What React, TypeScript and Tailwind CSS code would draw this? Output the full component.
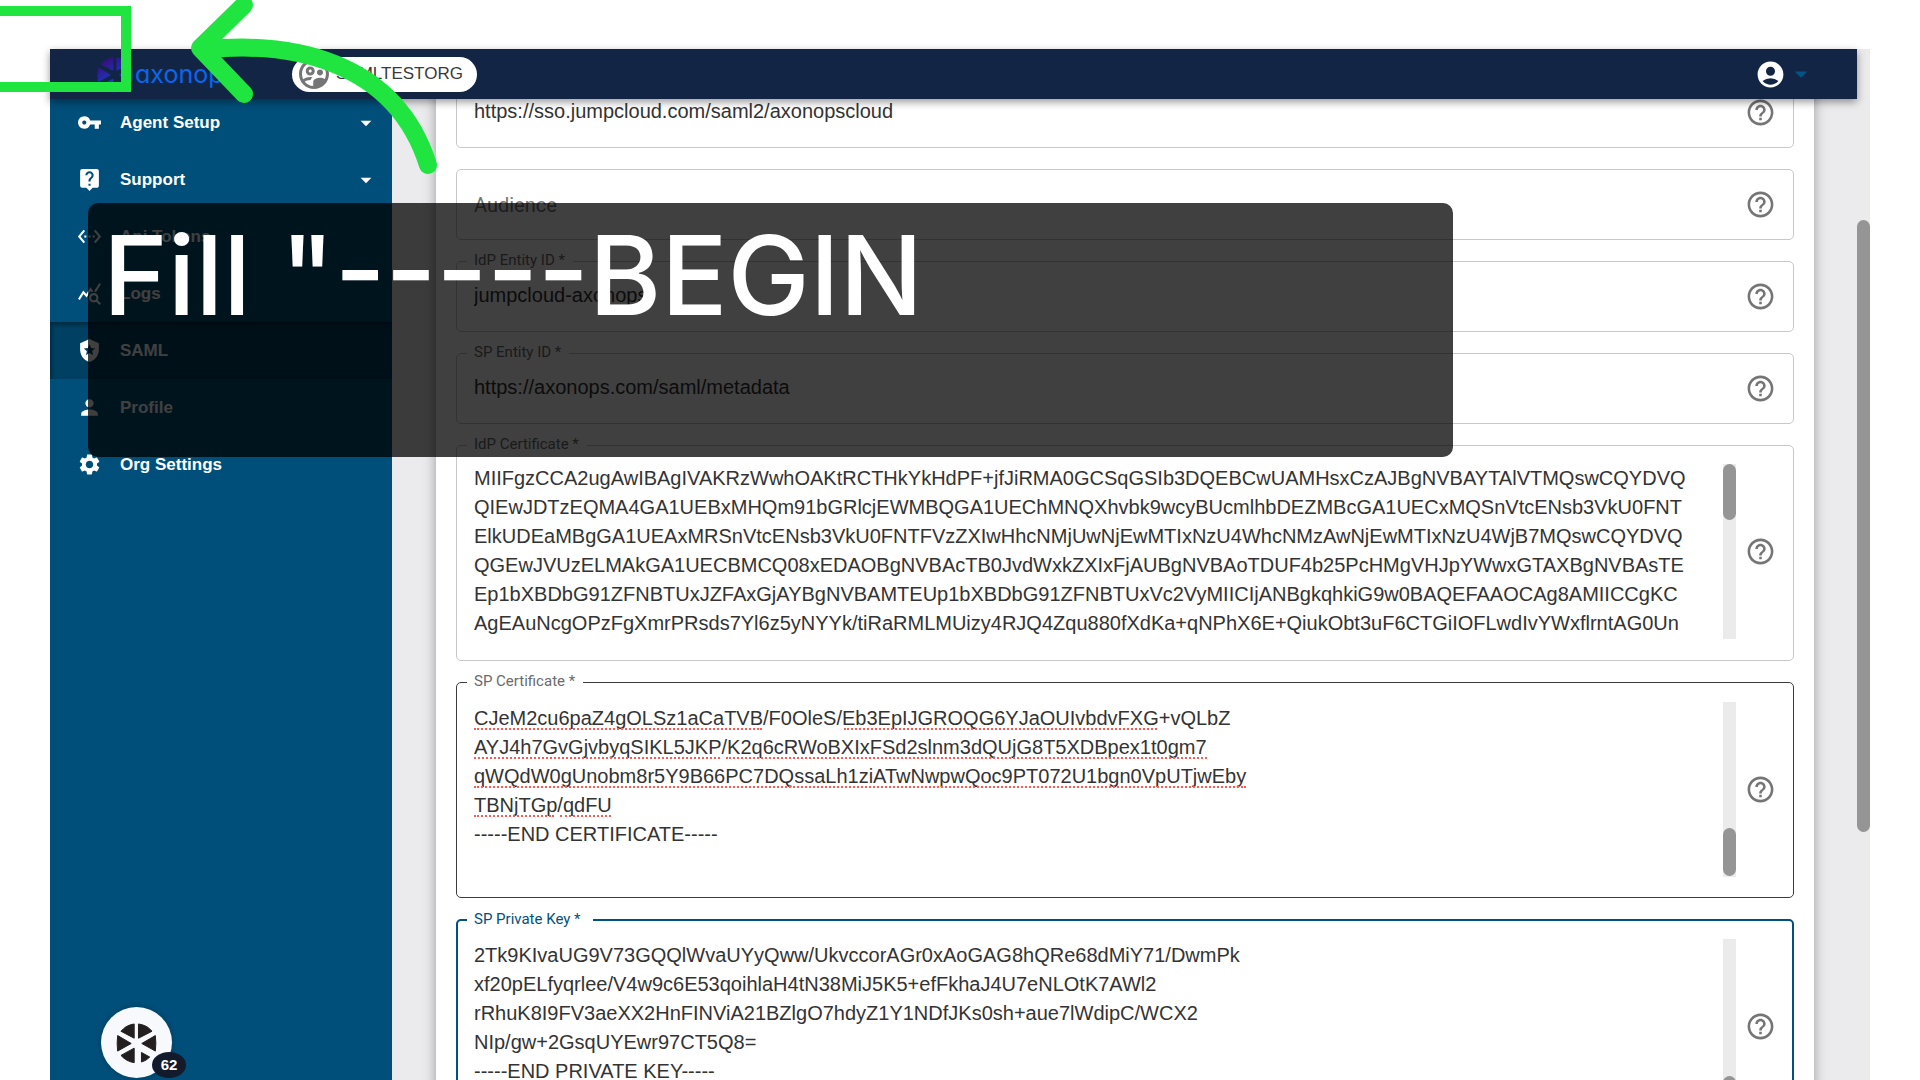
import type { ReactNode } from "react";
import {
  MdAccountCircle,
  MdArrowDropDown,
  MdHelpOutline,
  MdLiveHelp,
  MdLocalPolice,
  MdOutlineSupervisedUserCircle,
  MdPerson,
  MdQueryStats,
  MdSettings,
  MdSettingsEthernet,
  MdVpnKey,
} from "react-icons/md";

const IDP_CERT = [
  "MIIFgzCCA2ugAwIBAgIVAKRzWwhOAKtRCTHkYkHdPF+jfJiRMA0GCSqGSIb3DQEBCwUAMHsxCzAJBgNVBAYTAlVTMQswCQYDVQ",
  "QIEwJDTzEQMA4GA1UEBxMHQm91bGRlcjEWMBQGA1UEChMNQXhvbk9wcyBUcmlhbDEZMBcGA1UECxMQSnVtcENsb3VkU0FNT",
  "ElkUDEaMBgGA1UEAxMRSnVtcENsb3VkU0FNTFVzZXIwHhcNMjUwNjEwMTIxNzU4WhcNMzAwNjEwMTIxNzU4WjB7MQswCQYDVQ",
  "QGEwJVUzELMAkGA1UECBMCQ08xEDAOBgNVBAcTB0JvdWxkZXIxFjAUBgNVBAoTDUF4b25PcHMgVHJpYWwxGTAXBgNVBAsTE",
  "Ep1bXBDbG91ZFNBTUxJZFAxGjAYBgNVBAMTEUp1bXBDbG91ZFNBTUxVc2VyMIICIjANBgkqhkiG9w0BAQEFAAOCAg8AMIICCgKC",
  "AgEAuNcgOPzFgXmrPRsds7Yl6z5yNYYk/tiRaRMLMUizy4RJQ4Zqu880fXdKa+qNPhX6E+QiukObt3uF6CTGiIOFLwdIvYWxflrntAG0Un",
].join("\n");

const SP_CERT = [
  "CJeM2cu6paZ4gOLSz1aCaTVB/F0OleS/Eb3EpIJGROQG6YJaOUIvbdvFXG+vQLbZ",
  "AYJ4h7GvGjvbyqSIKL5JKP/K2q6cRWoBXIxFSd2slnm3dQUjG8T5XDBpex1t0gm7",
  "qWQdW0gUnobm8r5Y9B66PC7DQssaLh1ziATwNwpwQoc9PT072U1bgn0VpUTjwEby",
  "TBNjTGp/qdFU",
  "-----END CERTIFICATE-----",
].join("\n");

const SP_KEY = [
  "2Tk9KIvaUG9V73GQQlWvaUYyQww/UkvccorAGr0xAoGAG8hQRe68dMiY71/DwmPk",
  "xf20pELfyqrlee/V4w9c6E53qoihlaH4tN38MiJ5K5+efFkhaJ4U7eNLOtK7AWl2",
  "rRhuK8I9FV3aeXX2HnFINViA21BZlgO7hdyZ1Y1NDfJKs0sh+aue7lWdipC/WCX2",
  "NIp/gw+2GsqUYEwr97CT5Q8=",
  "-----END PRIVATE KEY-----",
].join("\n");

// Spell-check marks per line: [gap before, length].
const SPELLING: [number, number][][] = [
  [[0, 288], [82, 313]],
  [[0, 246], [6, 481]],
  [[0, 772]],
  [[0, 80], [6, 51]],
];

function Aperture({ className, fill }: { className: string; fill: string }) {
  return (
    <svg viewBox="108 122 122 127" className={className} aria-hidden="true">
      <defs>
        <linearGradient id="brand" x1="125" y1="130" x2="185" y2="240" gradientUnits="userSpaceOnUse">
          <stop offset="0" stopColor="#3a0a78" />
          <stop offset="1" stopColor="#0a4fe0" />
        </linearGradient>
      </defs>
      <g fill={fill} stroke={fill} strokeWidth="3" strokeLinejoin="round">
        <path d="M112 163 L153 187 L112 210 Q109 187 112 163Z" />
        <path d="M122 150 Q138 131 162 128 L162 171Z" />
        <path d="M175 128 Q200 131 216 150 L175 171Z" />
        <path d="M226 163 L185 187 L226 210 Q229 187 226 163Z" />
        <path d="M122 223 L162 201 L162 245 Q138 241 122 223Z" />
        <path d="M184 214 L209 228 Q198 240 184 243Z" />
      </g>
    </svg>
  );
}

function NavItem({ icon, label, caret, active }: { icon: ReactNode; label: string; caret?: boolean; active?: boolean }) {
  return (
    <a
      href="#"
      className={
        active
          ? "flex h-[57px] items-center bg-[#004163] pl-[27px] pr-[13px] text-[25px] shadow-[inset_2px_3px_4px_rgba(0,0,0,0.35)]"
          : "flex h-[57px] items-center pl-[27px] pr-[13px] text-[25px]"
      }
    >
      {icon}
      <span className="ml-[18px] flex-1 text-[17px] font-bold">{label}</span>
      {caret && <MdArrowDropDown className="text-[26px]" />}
    </a>
  );
}

function HelpButton({ label }: { label: string }) {
  return (
    <button type="button" aria-label={`Help for ${label}`} className="shrink-0 text-[31px] text-[#757575]">
      <MdHelpOutline />
    </button>
  );
}

function FieldLabel({ id, text, focused }: { id: string; text: string; focused?: boolean }) {
  return (
    <label
      htmlFor={id}
      className={
        focused
          ? "absolute -top-[11px] left-[9px] bg-white pl-[7px] pr-[12px] font-[Roboto,sans-serif] text-[15px] leading-[18px] text-[#00517d]"
          : "absolute -top-[11px] left-[10px] bg-white pl-[7px] pr-[8px] font-[Roboto,sans-serif] text-[15px] leading-[18px] text-[#6b6b6b]"
      }
    >
      {text} *
    </label>
  );
}

function TextField({ id, name, value, floating }: { id: string; name: string; value?: string; floating?: boolean }) {
  return (
    <div className="relative flex h-[71px] shrink-0 items-center rounded-[5px] border border-[#c8c8c8] pl-[17px] pr-[17px]">
      {floating && <FieldLabel id={id} text={name} />}
      <input
        id={id}
        type="text"
        aria-label={floating ? undefined : name}
        defaultValue={value}
        placeholder={value ? undefined : name}
        className="min-w-0 flex-1 bg-transparent pb-1 text-[20px] text-[#333333] outline-none placeholder:font-[Roboto,sans-serif] placeholder:text-[#757575] placeholder-shown:pb-0"
      />
      <HelpButton label={name} />
    </div>
  );
}

function AreaField({
  id,
  name,
  value,
  frame,
  inset,
  thumb,
  marks,
  focused,
}: {
  id: string;
  name: string;
  value: string;
  frame: string;
  inset: string;
  thumb: string;
  marks?: [number, number][][];
  focused?: boolean;
}) {
  return (
    <div className={`relative flex h-[216px] shrink-0 items-center rounded-[5px] ${frame}`}>
      <FieldLabel id={id} text={name} focused={focused} />
      <div className="relative flex h-[175px] min-w-0 flex-1">
        <textarea
          id={id}
          defaultValue={value}
          spellCheck={false}
          wrap="off"
          className={`h-full min-w-0 flex-1 resize-none overflow-hidden bg-transparent text-[20px] leading-[29px] text-[#333333] outline-none ${inset}`}
        />
        {marks && (
          <div aria-hidden="true" className="pointer-events-none absolute -top-[1px] left-0">
            {marks.map((row, i) => (
              <div key={i} className="flex h-[29px]">
                {row.map(([gap, length], j) => (
                  <span
                    key={j}
                    className="border-b-2 border-dotted border-[#ff5a52]"
                    style={{ marginLeft: gap, width: length }}
                  />
                ))}
              </div>
            ))}
          </div>
        )}
        <div className={`flex w-[13px] flex-col bg-[#ebebeb] ${thumb}`}>
          <div className="w-full rounded-full bg-[#959595] [flex-basis:var(--thumb)]" />
        </div>
      </div>
      <div className="ml-[9px] flex">
        <HelpButton label={name} />
      </div>
    </div>
  );
}

export default function App() {
  return (
    <div className="relative flex h-screen overflow-hidden bg-white px-[50px] pt-[49px] font-['Liberation_Sans',Arial,sans-serif]">
      <div className="flex min-w-0 flex-1 flex-col">
        <header className="relative z-10 flex h-[50px] shrink-0 items-center bg-[#122545] pl-[47px] pr-[41px] shadow-[0_3px_8px_rgba(0,0,0,0.4)]">
          <a href="#" className="flex w-[195px] items-center">
            <Aperture className="h-[37px] w-[36px]" fill="url(#brand)" />
            <span className="ml-[2px] font-[Inter,sans-serif] text-[25px] leading-[30px] text-[#0a66ee] [font-feature-settings:'cv11']">
              axonops
            </span>
          </a>
          <button
            type="button"
            className="flex h-[35px] items-center rounded-full bg-white pl-[4px] pr-[14px] text-[17px] text-[#3a3a3a]"
          >
            <MdOutlineSupervisedUserCircle className="mr-[4px] text-[36px] text-[#757575]" />
            SAMLTESTORG
          </button>
          <button type="button" aria-label="Account" className="ml-auto flex items-center text-[31px] text-white">
            <MdAccountCircle />
            <MdArrowDropDown className="text-[30px] text-[#005584]" />
          </button>
        </header>

        <div className="flex min-h-0 flex-1">
          <aside className="relative w-[342px] shrink-0 overflow-hidden bg-[#004f7a] text-white">
            <nav className="-mt-[5px]">
              <NavItem icon={<MdVpnKey />} label="Agent Setup" caret />
              <NavItem icon={<MdLiveHelp />} label="Support" caret />
              <NavItem icon={<MdSettingsEthernet />} label="Api Tokens" />
              <NavItem icon={<MdQueryStats />} label="Logs" />
              <NavItem icon={<MdLocalPolice />} label="SAML" active />
              <NavItem icon={<MdPerson />} label="Profile" />
              <NavItem icon={<MdSettings />} label="Org Settings" />
            </nav>
            <button
              type="button"
              aria-label="62 notifications"
              className="absolute bottom-[2px] left-[51px] flex h-[71px] w-[71px] items-center justify-center rounded-full bg-[#f8f9fc] shadow-[0_0_6px_rgba(0,0,0,0.25)]"
            >
              <Aperture className="h-[42px] w-[41px]" fill="#231f20" />
              <span className="absolute -right-[14px] bottom-0 flex h-[26px] w-[34px] items-center justify-center rounded-[50%] bg-[#131a2b] text-[15px] font-bold text-white">
                62
              </span>
            </button>
          </aside>

          <main className="flex min-w-0 flex-1 flex-col overflow-hidden bg-[#ebebee] pl-[44px] pr-[43px]">
            <form className="-mt-[22px] flex flex-col gap-[21px] bg-white px-[20px] shadow-[0_0_12px_rgba(0,0,0,0.35)]">
              <TextField id="sso" name="SSO URL" value="https://sso.jumpcloud.com/saml2/axonopscloud" />
              <TextField id="audience" name="Audience" />
              <TextField id="idp-entity" name="IdP Entity ID" value="jumpcloud-axonops" floating />
              <TextField id="sp-entity" name="SP Entity ID" value="https://axonops.com/saml/metadata" floating />
              <AreaField
                id="idp-cert"
                name="IdP Certificate"
                value={IDP_CERT}
                frame="border border-[#c8c8c8] px-[17px] pb-[4px]"
                inset="pt-0"
                thumb="[--thumb:56px]"
              />
              <AreaField
                id="sp-cert"
                name="SP Certificate"
                value={SP_CERT}
                marks={SPELLING}
                frame="border border-[#3c3c3c] px-[17px] pb-[2px]"
                inset="pt-[2px]"
                thumb="justify-end pb-[1px] [--thumb:48px]"
              />
              <AreaField
                id="sp-key"
                name="SP Private Key"
                value={SP_KEY}
                focused
                frame="border-2 border-[#00517d] px-[16px] pb-[2px]"
                inset="pt-[2px]"
                thumb="justify-end [--thumb:38px]"
              />
            </form>
          </main>
        </div>
      </div>

      <div className="flex w-[13px] shrink-0 flex-col bg-[#ebebeb] pt-[171px]">
        <div className="h-[612px] w-full rounded-full bg-[#959595]" />
      </div>

      <div className="absolute left-[88px] right-[467px] top-[203px] z-20 h-[254px] rounded-[10px] bg-black/75 pl-[15px]">
        <p className="whitespace-nowrap font-[Inter,sans-serif] text-[110px] font-medium leading-[145px] text-white">
          Fill "-----BEGIN
        </p>
      </div>
      <div className="absolute -left-[10px] top-[6px] z-20 h-[86px] w-[141px] border-[10px] border-[#20e540]" />
      <svg
        className="absolute left-[180px] top-0 z-20 h-[180px] w-[270px]"
        viewBox="180 0 270 180"
        fill="none"
        stroke="#20e540"
        strokeWidth="18"
        strokeLinecap="round"
        strokeLinejoin="round"
        aria-hidden="true"
      >
        <path d="M244 5 L200 48 L244 94" />
        <path d="M202 50 C290 40 395 60 428 165" />
      </svg>
    </div>
  );
}
